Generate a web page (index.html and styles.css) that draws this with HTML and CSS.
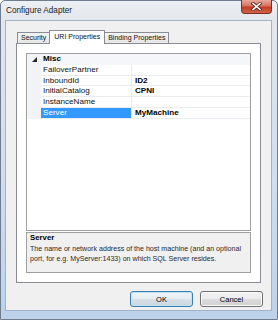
FILE: index.html
```html
<!DOCTYPE html>
<html>
<head>
<meta charset="utf-8">
<link rel="stylesheet" href="styles.css">
</head>
<body>
<div class="window">
  <div class="titlebar">
    <span class="title">Configure Adapter</span>
    <div class="close">
      <svg width="11" height="9" viewBox="0 0 11 9">
        <path d="M2 1.5 L9 7.5 M9 1.5 L2 7.5" stroke="#5a2a22" stroke-width="3.2" stroke-linecap="square"/>
        <path d="M2 1.5 L9 7.5 M9 1.5 L2 7.5" stroke="#ffffff" stroke-width="1.6" stroke-linecap="square"/>
      </svg>
    </div>
  </div>
  <div class="client">
    <div class="tabs">
      <div class="tab">Security</div>
      <div class="tab active">URI Properties</div>
      <div class="tab">Binding Properties</div>
    </div>
    <div class="page">
      <div class="grid">
        <div class="row cat">
          <div class="gutter">
            <svg width="5" height="5" viewBox="0 0 5 5"><polygon points="5,0 5,5 0,5" fill="#262626"/></svg>
          </div>
          <div class="catname">Misc</div>
        </div>
        <div class="row"><div class="gutter"></div><div class="name">FailoverPartner</div><div class="value"></div></div>
        <div class="row"><div class="gutter"></div><div class="name">InboundId</div><div class="value">ID2</div></div>
        <div class="row"><div class="gutter"></div><div class="name">InitialCatalog</div><div class="value">CPNI</div></div>
        <div class="row"><div class="gutter"></div><div class="name">InstanceName</div><div class="value"></div></div>
        <div class="row sel"><div class="gutter"></div><div class="name">Server</div><div class="value">MyMachine</div></div>
      </div>
      <div class="desc">
        <div class="desc-title">Server</div>
        <div class="desc-text">The name or network address of the host machine (and an optional port, for e.g. MyServer:1433) on which SQL Server resides.</div>
      </div>
    </div>
    <div class="buttons">
      <div class="btn default">OK</div>
      <div class="btn">Cancel</div>
    </div>
  </div>
</div>
</body>
</html>
```

FILE: styles.css
```css
* { box-sizing: border-box; }
html, body { margin: 0; padding: 0; background: #ffffff; }
body {
  font-family: "Liberation Sans", Arial, sans-serif;
  font-size: 8.1px;
  color: #000;
}
.window {
  width: 278px;
  height: 320px;
  border: 1px solid #6f7d8f;
  border-radius: 5px 5px 0 0;
  background: linear-gradient(180deg, #eceff3 0px, #e2e7ed 20px, #cddcee 200px, #bcd2ea 320px);
  padding: 0 5px 8px 4px;
  display: flex;
  flex-direction: column;
}
.titlebar {
  height: 19px;
  display: flex;
  align-items: flex-start;
}
.title {
  margin-left: 1px;
  margin-top: 5px;
  font-size: 8.2px;
  color: #1a1a1a;
  line-height: 10px;
}
.close {
  margin-left: auto;
  margin-top: -1px;
  width: 31px;
  height: 14px;
  border: 1px solid #7d2d22;
  border-top: none;
  border-radius: 0 0 4px 4px;
  background: linear-gradient(180deg, #e9a99a 0%, #d8735e 45%, #c53b22 55%, #d3624a 100%);
  display: flex;
  align-items: center;
  justify-content: center;
}
.close svg { display: block; }
.client {
  height: 291px;
  border: 1px solid #a3b3c6;
  background: #f0f0f0;
  padding: 9px 0 0 10px;
  display: flex;
  flex-direction: column;
}
.tabs {
  height: 13px;
  display: flex;
  align-items: flex-end;
  padding-left: 1px;
  position: relative;
  z-index: 1;
  font-size: 7px;
}
.tab {
  height: 11px;
  border: 1px solid #898c95;
  border-bottom: none;
  background: linear-gradient(180deg, #f4f4f4, #e6e6e6);
  padding: 0 3px;
  line-height: 10px;
  margin-right: -1px;
  white-space: nowrap;
  color: #111;
}
.tab.active {
  height: 14px;
  margin-bottom: -1px;
  background: #ffffff;
  padding: 1px 4px 0 4px;
  position: relative;
  z-index: 2;
}
.page {
  width: 245px;
  height: 240px;
  border: 1px solid #898c95;
  background: #ffffff;
  padding: 9px 0 0 9px;
  display: flex;
  flex-direction: column;
}
.grid {
  width: 225px;
  height: 178px;
  border: 1px solid #a0a0a0;
  background: #ffffff;
}
.row {
  height: 10.8px;
  display: flex;
  line-height: 10px;
}
.gutter {
  width: 14px;
  flex: none;
  background: #f1f3f7;
  display: flex;
  align-items: center;
  justify-content: center;
  padding-left: 1px;
}
.gutter svg { display: block; }
.cat { background: #f4f6fa; }
.catname {
  font-weight: bold;
  padding-left: 2px;
}
.name {
  width: 91px;
  flex: none;
  padding-left: 2px;
  border-bottom: 1px solid #e8ebf0;
  border-right: 1px solid #e8ebf0;
  white-space: nowrap;
  color: #111;
}
.value {
  flex: 1;
  padding-left: 3px;
  font-weight: bold;
  border-bottom: 1px solid #e8ebf0;
  white-space: nowrap;
}
.sel .name {
  background: #3399ff;
  color: #ffffff;
}
.desc {
  margin-top: 1px;
  width: 225px;
  height: 41px;
  border: 1px solid #a0a0a0;
  background: #f0f0f0;
  padding: 0 3px 0 3px;
  line-height: 10.5px;
}
.desc-title { font-weight: bold; font-size: 7.8px; }
.desc-text { color: #2a2a2a; font-size: 7.1px; }
.buttons {
  margin-top: 8px;
  display: flex;
  justify-content: flex-end;
  gap: 7px;
  padding-right: 8px;
  font-size: 7.5px;
}
.btn {
  width: 63px;
  height: 16px;
  border: 1px solid #707070;
  border-radius: 3px;
  background: linear-gradient(180deg, #f2f2f2 0%, #ebebeb 50%, #dddddd 50%, #cfcfcf 100%);
  display: flex;
  align-items: center;
  justify-content: center;
  box-shadow: inset 0 0 0 1px #fbfbfb;
}
.btn.default {
  border-color: #3c7fb1;
  box-shadow: inset 0 0 0 1px #bfe3f5;
  background: linear-gradient(180deg, #eef4f8 0%, #e6edf2 50%, #d8e1e8 50%, #cad6df 100%);
}
```
